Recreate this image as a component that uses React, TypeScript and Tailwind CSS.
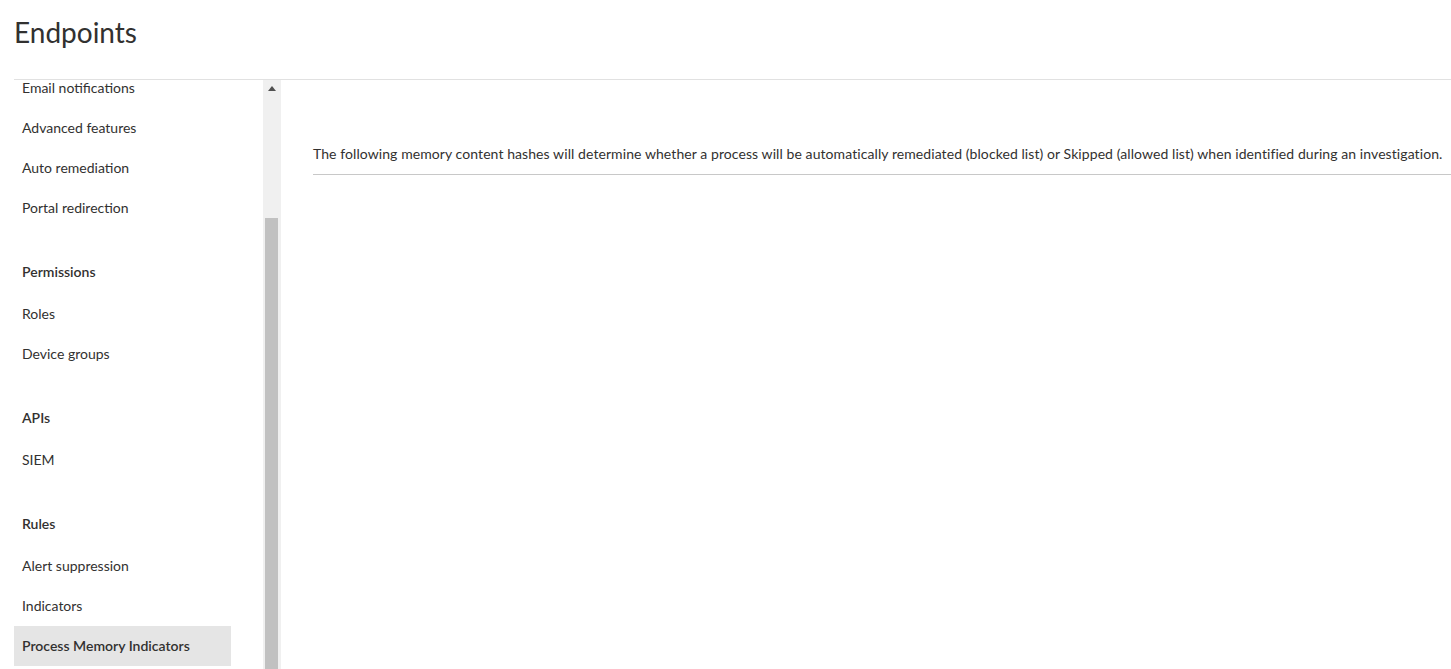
const sections: { title?: string; items: string[] }[] = [
  { items: ["Email notifications", "Advanced features", "Auto remediation", "Portal redirection"] },
  { title: "Permissions", items: ["Roles", "Device groups"] },
  { title: "APIs", items: ["SIEM"] },
  { title: "Rules", items: ["Alert suppression", "Indicators", "Process Memory Indicators"] },
];

const selected = "Process Memory Indicators";

function NavItem({ label }: { label: string }) {
  const active = label === selected;
  return (
    <div
      className={`h-10 flex items-center px-2 pb-[2px] text-[14px] text-[#323130] ${
        active ? "bg-[#e5e5e5] font-semibold" : ""
      }`}
    >
      {label}
    </div>
  );
}

export default function App() {
  return (
    <div
      className="h-[669px] overflow-hidden bg-white pl-[14px] text-[#323130]"
      style={{ fontFamily: "Lato, 'Open Sans', sans-serif" }}
    >
      <div className="h-[79px] pt-[13px]">
        <h1 className="text-[28px] leading-[38px] font-normal">Endpoints</h1>
      </div>
      <div className="h-[590px] flex border-t border-[#e1e1e1]">
        <nav className="w-[217px] overflow-hidden">
          <div className="-mt-[12px]">
            {sections.map((s, i) => (
              <div key={i}>
                {s.title && (
                  <div className="mt-[22px] h-[44px] flex items-center px-2 pb-[2px] text-[14px] font-semibold">
                    {s.title}
                  </div>
                )}
                {s.items.map((it) => (
                  <NavItem key={it} label={it} />
                ))}
              </div>
            ))}
          </div>
        </nav>
        <div className="ml-[32px] w-[18px] bg-[#f0f0f0] flex flex-col">
          <div className="h-[17px] flex items-center justify-center">
            <svg width="8" height="5" viewBox="0 0 8 5">
              <path d="M4 0 L8 5 L0 5 Z" fill="#505050" />
            </svg>
          </div>
          <div className="h-[121px]" />
          <div className="ml-[2px] w-[13px] flex-1 bg-[#c1c1c1]" />
        </div>
        <main className="flex-1 pl-[32px] pt-[64px]">
          <p className="text-[14px] leading-5 tracking-[0.08px] pb-[10px] border-b border-[#c8c8c8]">
            The following memory content hashes will determine whether a process will be automatically
            remediated (blocked list) or Skipped (allowed list) when identified during an investigation.
          </p>
        </main>
      </div>
    </div>
  );
}
